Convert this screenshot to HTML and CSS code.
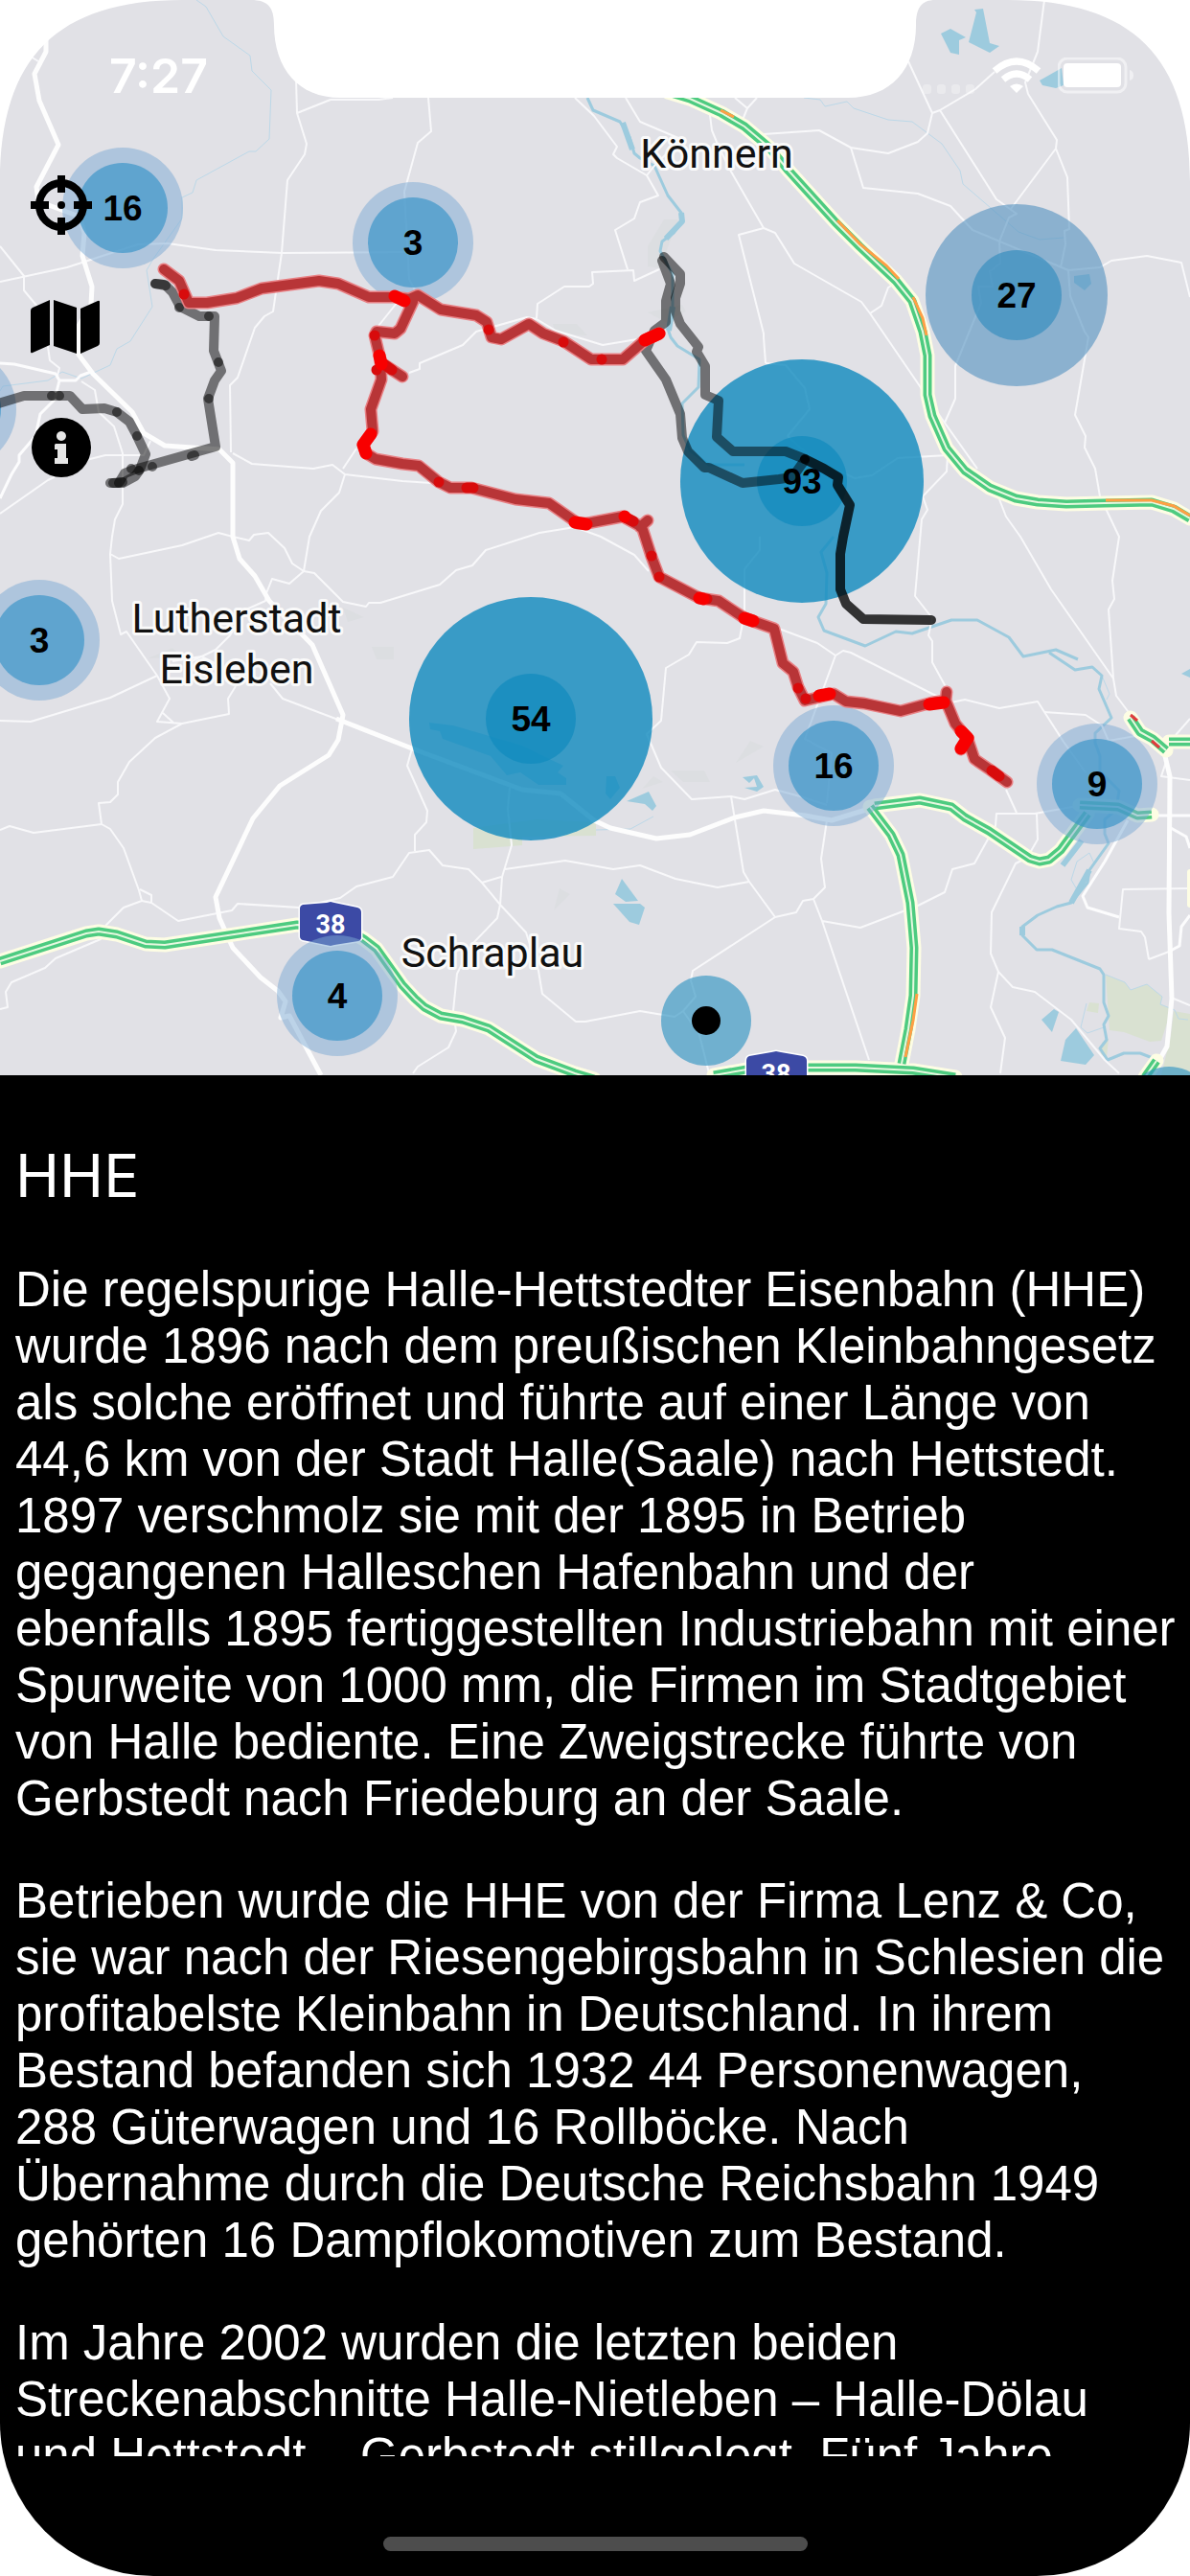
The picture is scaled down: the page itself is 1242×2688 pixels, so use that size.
FILE: index.html
```html
<!doctype html>
<html lang="de">

<head>
  <meta charset="UTF-8" />
  <meta name="viewport" content="width=device-width, initial-scale=1.0" />
  <title>HHE</title>
  <link rel="stylesheet" href="styles.css">
</head>

<body>
  <div class="phone">
    <div class="map">
      <svg class="map-canvas" viewBox="0 0 1242 1122" role="img" aria-label="Karte">
        <rect class="land" width="1242" height="1122" />

        <!-- parks and built-up areas -->
        <g class="park">
          <path d="M1154 1017L1174 1025L1180 1033L1197 1027L1213 1040L1211 1048L1223 1052L1212 1086L1200 1087L1173 1077L1158 1075ZM1225 1055L1242 1058V1122H1212L1222 1080ZM1137 1046L1147 1047L1146 1057L1134 1055ZM1150 1088L1157 1084L1155 1104L1149 1100Z" />
          <path d="M494 864V886L545 882V873L622 872V858L560 855Z" />
        </g>
        <path class="built" d="M693 229L708 229L700 250L689 280L676 278V257ZM700 804H735L741 816H713ZM388 675H411V688H393ZM358 634L380 644L363 649ZM768 796L783 773L797 779ZM584 927L595 933L578 950ZM670 823L682 810L692 816ZM577 338H602L613 350L580 349ZM676 326L712 318L716 325L695 336ZM155 687L180 676L190 686Z" />

        <!-- water -->
        <g class="stream">
          <path d="M205 0L215 7L233 38L261 58L263 74L283 94L281 145L267 158L260 158L205 188L201 201L190 206V228L160 270L153 282L159 320L136 356L122 364L115 381L85 395L65 388L50 397L3 403L0 408" />
          <path d="M839 102L856 104L861 111L884 106L891 113L927 125L952 127L983 150L1002 178L1005 192L1063 242L1085 250L1110 248" />
          <path d="M1150 705L1158 724L1155 730M1137 890L1124 899L1118 918L1125 930M1137 890L1142 901L1136 908M1134 1047L1128 1072L1135 1078L1152 1072M1154 1017L1174 1025L1180 1033L1197 1027L1213 1040L1211 1048L1226 1054L1230 1063L1240 1064M622 866L658 865L682 852" />
        </g>
        <g class="river">
          <path d="M613 102L619 115L647 127L657 143L662 160L668 165L683 173L697 204L711 222L712 231L703 243L691 252L689 262L702 286V321L697 343L700 352L707 361L730 375L729 404L712 421L713 454L720 470L740 485H777" />
          <path d="M870 560L857 576L863 598L862 630L854 644L860 658L903 674L935 659L952 661L993 647H1020L1053 665L1068 685L1102 678L1125 688" />
          <path d="M1095 681L1122 699L1140 696L1150 705L1147 719L1160 749L1143 765V775L1148 789V805L1168 825L1165 845L1153 855V870L1157 880L1137 908L1135 921L1118 942L1103 946L1083 955L1067 967V976L1082 991H1098L1148 1011L1152 1017V1046L1157 1060L1152 1069L1155 1085L1148 1094L1156 1106L1173 1099H1190L1208 1106" />
        </g>
        <path class="river-wide" d="M650 128L660 156M711 222L712 231L695 249M1129 877L1109 903M1067 967V976M1137 908L1118 942M702 320L698 345" />
        <g class="lake">
          <path d="M1017 10L1026 9L1033 45L1043 48L1033 55L1011 44L1019 13Z" />
          <path d="M982 35L992 30L1008 39L1001 42V57L992 55Z" />
          <path d="M1085 84L1108 71L1110 89L1102 92L1088 89Z" />
          <path d="M1121 288L1137 286L1139 296L1132 303L1121 295Z" />
          <path d="M649 917L666 940L653 941L642 933Z" />
          <path d="M640 943H668L673 947L667 965L657 962Z" />
          <path d="M654 836L677 826L685 841L681 846L673 839Z" />
          <path d="M448 754L473 757L545 778L588 799L582 806L591 812V819H562L543 806L529 809L512 789L462 771L459 763L449 761Z" />
          <path d="M633 810H642L647 822L637 834L632 828Z" />
          <path d="M775 811L790 809L797 821L790 826L777 822L790 821L787 812L782 817Z" />
          <path d="M1100 1053L1105 1056L1098 1077L1087 1064Z" />
          <path d="M1123 1073L1142 1101L1133 1111L1107 1107L1112 1085Z" />
          <path d="M1233 703L1242 698V707Z" />
        </g>

        <!-- minor roads -->
        <g class="road">
          <path d="M0 257L25 288V303L45 327L52 376L62 384L60 392" />
          <path d="M0 294L70 279L144 255L175 254L225 261L295 264L431 263M32 59L40 64" />
          <path d="M309 83L310 118L320 150L318 161L300 188L294 264L285 325L276 330L266 342L248 394L240 402L241 472M310 118L345 104H395L410 102" />
          <path d="M243 473L263 484L327 489L347 485L360 495L354 514L335 533L323 560L317 596M360 495L420 502L450 504M358 489L372 468M415 315L395 340" />
          <path d="M85 398L99 407L103 430L119 445L128 473V526L120 542L117 560L115 578L117 627L126 662L132 659L164 705L177 729L164 753L190 755L239 745L238 729L246 716M170 744L182 755" />
          <path d="M90 480L110 475L150 475L157 460M0 536L50 501L90 482" />
          <path d="M0 752L32 753L115 728L164 705" />
          <path d="M190 755L162 770L135 795L123 816V829L115 837L103 838L106 860L115 865L129 885L145 929L148 940L129 947L111 965L105 980L58 1000L47 1010L12 1025L6 1035L8 1051L0 1053" />
          <path d="M0 866L10 862L35 869L106 860M146 928L158 934V942" />
          <path d="M148 940L158 942L186 961L242 950L248 943L312 947L355 937L372 925L410 915L427 890L448 887L462 903L489 907L503 921L522 944L549 973L562 1013L566 1037L601 1066H611L668 1055L704 1061L713 1055L726 1040L721 1023L723 1013L809 957L782 920L776 910L763 831" />
          <path d="M713 1055L730 1080L740 1120" />
          <path d="M433 888V871L445 858L446 846L425 799L430 781" />
          <path d="M532 822L530 844L534 882L524 915L522 944L519 958L493 985L477 1016L473 1055L476 1076L468 1093L436 1113L431 1120" />
          <path d="M527 907L590 898L640 907L668 903L705 917L749 926L782 920M503 921L523 915" />
          <path d="M115 578L124 583L190 569L228 556L243 560L260 564L265 558L280 556L297 572L305 588L317 596L328 598L358 628L382 633L385 629H397L420 622L459 610L476 595L493 590L507 574L563 556L600 550L627 560L662 579L677 596" />
          <path d="M317 596L302 609L284 604L278 619L277 627L257 636L240 663L225 678L200 690M180 690L210 685L240 700M282 713L295 729L353 751" />
          <path d="M793 560V574L777 594V640L772 666L759 671L727 670L719 683L695 697L690 752L675 766L690 801L722 834L763 831L777 834L809 824L835 831L863 840" />
          <path d="M813 656L853 671L872 684L880 679L888 681L973 724L993 733L1007 730L1043 739L1083 732L1110 774L1133 806M872 684L840 771L868 786L863 838" />
          <path d="M1090 743L1133 746L1150 757L1157 773L1185 768" />
          <path d="M799 379L820 381L840 405L845 427L822 455L850 480L892 499L910 496L937 478L989 475L988 492L963 518L968 532L962 542L955 622L973 645L969 663L973 669V691L985 713L990 722" />
          <path d="M741 120L743 136L750 153L763 179L797 238L809 243L829 275L899 315L908 327L960 403L983 437L1020 489M797 238L771 245L797 348V352L799 379M908 327L920 319L927 300L932 297" />
          <path d="M797 140L855 136L888 154L927 160L958 148L968 139L973 118L948 64M973 118L981 115L1018 93L1038 75M981 115L1040 208L1061 223L1053 227L1043 252L1044 275L1033 283L1036 299H1021L1024 316L997 382V416L986 441" />
          <path d="M888 154L901 196L958 202L992 215L1015 240L1115 282L1148 279L1160 272L1197 267L1233 274L1242 310" />
          <path d="M1090 0L1083 54L1070 86L1073 98L1103 146L1102 155L1114 185L1116 239L1111 241L1112 255L1107 279M1102 155L1055 218" />
          <path d="M1115 282L1117 309L1132 346L1136 352L1122 433L1133 455L1132 467L1143 489L1148 518L1168 560L1161 606L1163 625L1157 636L1162 708L1165 726L1180 746" />
          <path d="M1043 521L1050 539L1065 560L1097 615L1162 708" />
          <path d="M447 102L450 137L436 149L422 200L427 291L434 305" />
          <path d="M427 389L438 385V379L483 360L497 346L550 331L560 333L580 345L629 360L665 354M560 332L561 317L589 299H615L619 296L618 284L661 282L662 293L688 281M655 281L642 240L662 228L668 211L687 204L675 183L644 165L640 161L644 153L620 121L600 102M675 183L683 173L700 156M653 102L668 127L715 147" />
          <path d="M767 102L780 113L775 125M780 113L790 102" />
          <path d="M1050 824L1061 848M1130 840L1080 849H1040L1039 862L1032 874L1017 901L994 907L986 931L958 945L898 968L858 961L849 938L861 926L857 896L863 856M849 938L838 940L831 952L809 957M858 961L907 1106" />
          <path d="M1082 849L1083 876L1072 895L1060 901L1035 952L1034 995L1042 1014L1057 1030L1080 1035L1118 1064L1153 1106L1168 1120M1042 1014L1034 1051L1049 1083L1044 1120" />
          <path d="M1199 1001L1195 978L1191 972L1168 969L1172 928L1242 927M1220 993L1199 1001M1217 795L1212 810L1242 814M1227 767L1242 750M1225 1042L1242 1049" />
        </g>
        <g class="road road-mid">
          <path d="M0 379L15 380L58 390L62 397H79L84 392L95 388M62 397L57 417L42 432L37 455L20 475V482L12 495L0 520" />
          <path d="M1203 851H1242M1222 864L1238 873L1242 885M1242 955L1233 967L1231 987L1220 993M1177 856L1153 899L1130 935L1135 947L1168 957" />
        </g>
        <g class="road road-major">
          <path d="M48 36L48 54L36 77L41 105L61 151L38 195L40 210L83 226L88 243L86 267L96 299L95 318L82 340V370L97 390L138 430L150 452L172 465L229 469L243 483V560L250 583L266 601L281 627L326 673L358 746L353 772L343 788L292 820L264 854L225 936L229 958L243 989L272 1020L290 1034L298 1045L293 1062L302 1060L335 1122" />
          <path d="M351 750L430 781L545 824L585 828L620 856L637 864L685 875L720 871L767 853L797 846L840 851L868 856L907 844" />
          <path d="M1215 785L1221 810L1220 953L1223 1042L1218 1092L1210 1106" />
        </g>

        <!-- motorways with traffic -->
        <defs>
          <path id="motorways" d="M697 96L720 103L753 118L777 132L803 154L823 178L872 232L897 257L935 293L952 314L963 346L968 371V412L973 434L988 468L1007 491L1033 509L1060 520L1083 524L1113 526L1153 525L1202 524L1225 531L1242 541
            M0 1003L90 974L103 972L122 975L152 985L172 986L310 965L360 968L380 980L393 990L420 1028L433 1042L443 1051L460 1060L483 1064L510 1073L560 1105L600 1120L620 1126
            M745 1122L785 1115L845 1114H893L953 1117L997 1124
            M908 842L930 871L940 892L950 942L954 989L953 1039L948 1074L941 1110
            M913 841L960 835L993 842L1007 853L1032 867L1075 896L1085 899L1095 897L1107 887L1135 849M1127 840L1167 842L1187 851L1202 850
            M1180 749L1190 764L1203 771L1217 783M1220 774H1242M1207 1107L1195 1124" />
        </defs>
        <use href="#motorways" class="motorway-halo" />
        <use href="#motorways" class="motorway" />
        <use href="#motorways" class="motorway-median" />
        <path class="motorway-halo-thin" d="M1242 910V944" />
        <path class="slow" d="M752 115L766 122M874 230L898 255L925 277L938 291M953 310L963 332L967 350M1154 522H1202L1225 528L1242 538M957 1037L953 1065L945 1103" />
        <path class="jam" d="M1180 746L1187 752M1202 773L1210 780" />

        <g class="shield">
          <path d="M313 948Q313 945 316 944L341 942L345 941L349 942L373 947Q377 948 377 952V978Q377 981 374 982L349 986L345 987L340 986L316 981Q313 980 313 977Z" />
          <text x="345" y="974">38</text>
          <path d="M779 1107Q779 1103 782 1102L805 1098L810 1097L815 1098L838 1102Q842 1103 842 1107V1130H779Z" />
          <text x="810" y="1130">38</text>
        </g>

        <g class="place">
          <text x="748" y="175">Könnern</text>
          <text x="247" y="660">Lutherstadt</text>
          <text x="247" y="713">Eisleben</text>
          <text x="514" y="1009">Schraplau</text>
        </g>

        <!-- cluster bubbles -->
        <g class="cluster">
          <circle cx="-46" cy="427" r="63" /><circle class="core" cx="-46" cy="427" r="47" />
          <circle cx="128" cy="217" r="63" /><circle class="core" cx="128" cy="217" r="47" />
          <circle cx="431" cy="253" r="63" /><circle class="core" cx="431" cy="253" r="47" />
          <circle cx="41" cy="668" r="63" /><circle class="core" cx="41" cy="668" r="47" />
          <circle cx="870" cy="799" r="63" /><circle class="core" cx="870" cy="799" r="47" />
          <circle cx="1145" cy="818" r="63" /><circle class="core" cx="1145" cy="818" r="47" />
          <circle cx="352" cy="1039" r="63" /><circle class="core" cx="352" cy="1039" r="47" />
        </g>
        <g class="cluster cluster-medium">
          <circle cx="1061" cy="308" r="95" /><circle class="core" cx="1061" cy="308" r="47" />
        </g>
        <g class="cluster cluster-large">
          <circle cx="837" cy="502" r="127" /><circle class="core" cx="837" cy="502" r="47" />
          <circle cx="554" cy="750" r="127" /><circle class="core" cx="554" cy="750" r="47" />
        </g>
        <g class="single">
          <circle cx="737" cy="1065" r="47" /><circle cx="1220" cy="1160" r="47" />
        </g>
        <circle cx="737" cy="1065" r="15" />

        <!-- disused lines -->
        <g class="track">
          <path d="M-5 422L25 413H73L86 427L109 426L122 430L135 440L143 455L152 474L146 490L141 497L128 504H115" />
          <path d="M162 296L172 297L180 305L188 320L208 330H224L223 366L231 387L224 397L217 416L225 466L140 490L130 494L124 504" />
          <path d="M693 268L710 286V296L705 311V325L710 338L729 362L727 367L736 382V412L750 418L748 456L765 471H820L840 479" />
          <path d="M691 272L700 296L695 314V336L683 345L674 366L695 396L710 432L712 457L718 471L735 488H740L775 504L813 500L827 498L840 480" />
          <path d="M162 296L173 298M54 413V413M62 413V413M122 430V430M143 455V455M137 489V489M159 487V487M200 476L203 475M228 378V378M218 416V416M218 330V330M187 321V321M145 491V491M118 504L128 503M162 296L170 297M120 504L126 503" />
          <path class="track-dark" d="M840 479L860 489L875 498L874 506L887 527L880 560L877 578V615L883 630L901 646L972 647" />
        </g>

        <!-- HHE line -->
        <defs>
          <path id="hhe" d="M171 281L187 293L197 316H216L247 311L273 301L333 293L353 296L385 310H412L427 312L436 308L460 323L497 329L508 336L513 352L523 354L552 338L567 348L588 356L617 375H650L673 355L688 348
            M431 315L418 343L412 348L393 346L391 350L397 375L398 396L387 427L389 450L379 464L382 473L392 479L420 484L437 486L458 503L470 509H492L538 521L573 525L603 546H613L650 539L670 550L680 581L688 602L730 624L750 627L777 645L808 656L817 692L828 701L833 717L840 731L870 724L883 732L902 734L940 742L973 733L987 731L997 755L1010 771L1017 792L1033 803L1051 816
            M397 378L420 393M668 550L676 543M987 731L988 722M1010 771L1003 782" />
        </defs>
        <use href="#hhe" class="hhe-edge" />
        <use href="#hhe" class="hhe" />
        <path class="hhe-stop hhe-stop-minor" d="M192 307V307M510 344V344M588 357V357M628 375V375M393 386V386M398 378L409 386M391 350V350M458 503V503M487 509H494M653 540L661 544M680 580V580M688 602V602M738 625V625M833 718V718M841 729V729M1035 804L1043 810" />
        <path class="hhe-stop" d="M412 309L422 314M396 371L398 380M387 453L379 464L382 473M673 355L688 348M600 545L612 547M652 539V539M730 624L734 625M777 645L786 648M855 726L866 724M970 735L985 733M1003 763L1010 770L1003 781" />

        <g class="count">
          <text x="128" y="230">16</text>
          <text x="431" y="266">3</text>
          <text x="1061" y="321">27</text>
          <text x="837" y="515">93</text>
          <text x="554" y="763">54</text>
          <text x="41" y="681">3</text>
          <text x="870" y="812">16</text>
          <text x="1145" y="831">9</text>
          <text x="352" y="1052">4</text>
        </g>

        <!-- notch and top corners -->
        <path class="bezel" d="M0 190C0 60 60 0 190 0H0ZM1242 190C1242 60 1182 0 1052 0H1242ZM262 0C280 0 286 8 286 26C286 72 312 102 355 102H885C930 102 956 72 956 26C956 8 962 0 976 0Z" />
      </svg>

      <header class="status-bar">
        <time class="clock">7:27</time>
        <div class="status-icons">
          <svg width="54" height="10" viewBox="0 0 54 10" fill="#fff" opacity=".3">
            <rect width="9" height="10" rx="3" /><rect x="15" width="9" height="10" rx="3" /><rect x="30" width="9" height="10" rx="3" /><rect x="45" width="9" height="10" rx="3" />
          </svg>
          <svg class="wifi" width="52" height="38" viewBox="0 0 52 38" fill="none" stroke="#fff" stroke-width="7">
            <path d="M3 14Q26 -6 49 14M12 23Q26 11 40 23" />
            <path d="M19 30Q26 25 33 30L26 37Z" fill="#fff" stroke="none" />
          </svg>
          <svg class="battery" width="80" height="38" viewBox="0 0 80 38">
            <rect x="1" y="1" width="70" height="35" rx="9" fill="none" stroke="#fff" stroke-width="3" opacity=".5" />
            <rect x="6" y="6" width="60" height="25" rx="4" fill="#fff" />
            <path d="M75 13Q79 14 79 18.500Q79 23 75 24Z" fill="#fff" opacity=".5" />
          </svg>
        </div>
      </header>

      <nav class="tools">
        <button type="button" aria-label="Standort">
          <svg width="64" height="64" viewBox="0 0 64 64" fill="none" stroke="#000">
            <circle cx="32" cy="32" r="23" stroke-width="8" />
            <path d="M32 1V19M32 45V63M0 32H19M45 32H64" stroke-width="8" />
            <circle cx="32" cy="32" r="4" fill="#000" stroke="none" />
          </svg>
        </button>
        <button type="button" aria-label="Karte">
          <svg width="72" height="56" viewBox="0 0 72 56">
            <path d="M20 0V47L2 55Q0 56 0 54V11Q0 9 2 8ZM24 0L48 8V56L24 48ZM52 9L70 1Q72 0 72 2V45Q72 47 70 48L52 56Z" />
          </svg>
        </button>
        <button type="button" aria-label="Info">
          <svg width="64" height="62" viewBox="0 0 64 62">
            <circle cx="32" cy="31" r="31" />
            <path fill="#fff" fill-opacity=".9" d="M32 14A5 5 0 1 1 31.900 14ZM26 27H37V42H39V48H25V42H28V33H25V28Z" />
          </svg>
        </button>
      </nav>
    </div>

    <main class="info">
      <h1>HHE</h1>
      <p>Die regelspurige Halle-Hettstedter Eisenbahn (HHE) wurde 1896 nach dem preußischen Kleinbahngesetz als solche eröffnet und führte auf einer Länge von 44,6 km von der Stadt Halle(Saale) nach Hettstedt. 1897 verschmolz sie mit der 1895 in Betrieb gegangenen Halleschen Hafenbahn und der ebenfalls 1895 fertiggestellten Industriebahn mit einer Spurweite von 1000 mm, die Firmen im Stadtgebiet von Halle bediente. Eine Zweigstrecke führte von Gerbstedt nach Friedeburg an der Saale.</p>
      <p>Betrieben wurde die HHE von der Firma Lenz &amp; Co, sie war nach der Riesengebirgsbahn in Schlesien die profitabelste Kleinbahn in Deutschland. In ihrem Bestand befanden sich 1932 44 Personenwagen, 288&nbsp;Güterwagen und 16 Rollböcke. Nach Übernahme durch die Deutsche Reichsbahn 1949 gehörten 16 Dampflokomotiven zum Bestand.</p>
      <p>Im Jahre 2002 wurden die letzten beiden Streckenabschnitte Halle-Nietleben – Halle-Dölau und Hettstedt – Gerbstedt stillgelegt. Fünf Jahre</p>
    </main>

    <footer class="home">
      <div class="home-indicator"></div>
    </footer>
  </div>
</body>

</html>
```

FILE: styles.css
```css
body {
  margin: 0;
  background: #fff;
}

.phone {
  display: flex;
  flex-direction: column;
  height: 100vh;
  overflow: hidden;
  background: #000;
  border-radius: 0 0 160px 160px;
}

/* map */
.map {
  position: relative;
  flex: none;
}

.map-canvas {
  display: block;
  width: 100%;
  height: auto;
}

.land {
  fill: #e1e1e6;
}

.park {
  fill: #d9e1d1;
}

.built {
  fill: #dcdee1;
}

.lake {
  fill: #9dcbde;
}

.stream,
.river,
.river-wide {
  fill: none;
  stroke: #9dcbde;
  stroke-width: 3;
  stroke-linejoin: round;
}

.stream {
  stroke: #bcd8e8;
  stroke-width: 1;
}

.river-wide {
  stroke-width: 6;
}

.road {
  fill: none;
  stroke: #f8f8fa;
  stroke-width: 2;
  stroke-linejoin: round;
}

.road-mid {
  stroke: #fcfcfd;
  stroke-width: 3;
}

.road-major {
  stroke: #fdfdfd;
  stroke-width: 5;
}

.motorway-halo,
.motorway-halo-thin {
  fill: none;
  stroke: #fdfde4;
  stroke-width: 15;
  stroke-linejoin: round;
  stroke-linecap: round;
}

.motorway-halo-thin {
  stroke-width: 6;
}

.motorway {
  fill: none;
  stroke: #4dcb80;
  stroke-width: 9;
  stroke-linejoin: round;
}

.motorway-median {
  fill: none;
  stroke: #e6f8df;
  stroke-width: 2;
}

.slow,
.jam {
  fill: none;
  stroke: #ff9f45;
  stroke-width: 3;
}

.jam {
  stroke: #e03c3c;
}

.shield path {
  fill: #3c4aa5;
  stroke: #fff;
  stroke-width: 3;
  paint-order: stroke;
}

.shield text {
  fill: #fff;
  font: 700 27px Roboto, sans-serif;
  text-anchor: middle;
}

.place {
  fill: #111;
  stroke: #fafafa;
  stroke-width: 6;
  stroke-linejoin: round;
  paint-order: stroke;
  font: 400 43px Roboto, sans-serif;
  text-anchor: middle;
}

.cluster {
  fill: rgba(123, 169, 212, 0.5);
}

.cluster .core {
  fill: rgba(61, 150, 201, 0.7);
}

.cluster-medium {
  fill: rgba(82, 145, 192, 0.6);
}

.cluster-medium .core {
  fill: rgba(57, 143, 191, 0.7);
}

.cluster-large {
  fill: rgba(15, 138, 190, 0.8);
}

.cluster-large .core {
  fill: rgba(15, 138, 190, 0.7);
}

.single {
  fill: rgba(51, 149, 195, 0.65);
}

.count {
  fill: #000;
  font: 700 37px "Liberation Sans", Arial, sans-serif;
  text-anchor: middle;
}

.track {
  fill: none;
  stroke: rgba(0, 0, 0, 0.5);
  stroke-width: 10;
  stroke-linecap: round;
  stroke-linejoin: round;
}

.track-dark {
  stroke: rgba(0, 0, 0, 0.78);
}

.hhe-edge,
.hhe,
.hhe-stop {
  fill: none;
  stroke: #e88084;
  stroke-width: 13;
  stroke-linecap: round;
  stroke-linejoin: round;
}

.hhe {
  stroke: #b83537;
  stroke-width: 10;
}

.hhe-stop {
  stroke: #f80000;
}

.hhe-stop-minor {
  stroke: #d80b0c;
  stroke-width: 11;
}

.bezel {
  fill: #fff;
}

/* status bar */
.status-bar {
  position: absolute;
  top: 0;
  left: 0;
  right: 0;
  display: flex;
  justify-content: space-between;
  padding: 49px 58px 0 114px;
}

.clock {
  color: #fff;
  font: 600 50px/60px Inter, sans-serif;
}

.status-icons {
  display: flex;
  align-items: flex-end;
  height: 49px;
}

.wifi {
  margin: 0 17px 0 18px;
}

/* map buttons */
.tools {
  position: absolute;
  top: 182px;
  left: 32px;
  display: flex;
  flex-direction: column;
  align-items: flex-start;
  gap: 67px;
}

.tools button {
  padding: 0;
  border: 0;
  background: none;
  cursor: pointer;
}

.tools svg {
  display: block;
}

/* text panel */
.info {
  flex: 1;
  min-height: 0;
  padding: 68px 14px 0 16px;
  overflow-y: auto;
  scrollbar-width: none;
  color: #fff;
  font-family: "Liberation Sans", Arial, sans-serif;
  font-size: 51px;
  line-height: 59px;
}

.info h1 {
  margin: 0 0 52px;
  font: 400 62px/74px Inter, sans-serif;
}

.info p {
  margin: 0 0 48px;
}

.home {
  flex: none;
  display: flex;
  justify-content: center;
  align-items: flex-end;
  height: 125px;
}

.home-indicator {
  width: 443px;
  height: 15px;
  margin-bottom: 26px;
  border-radius: 8px;
  background: #4d4d4d;
}
```
